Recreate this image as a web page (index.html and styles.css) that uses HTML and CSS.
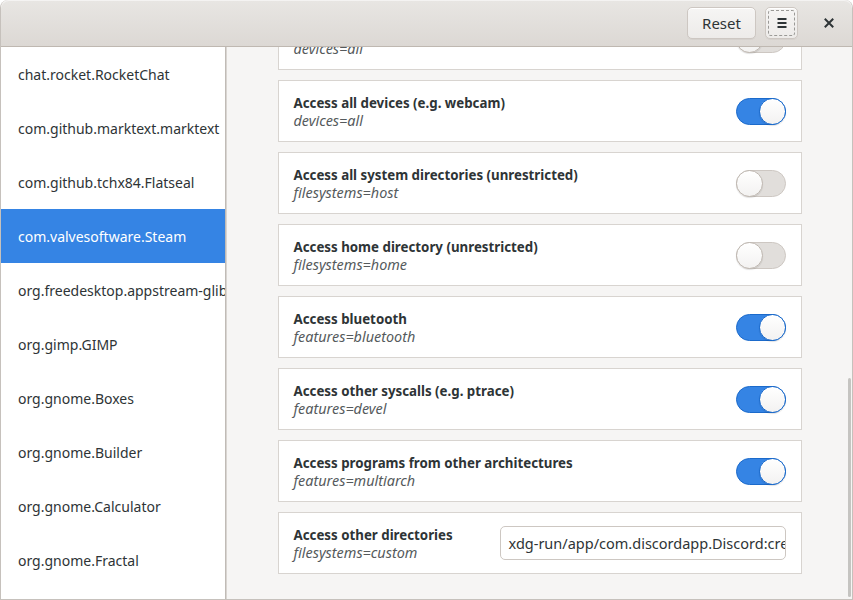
FILE: index.html
```html
<!DOCTYPE html>
<html>
<head>
<meta charset="utf-8">
<link rel="stylesheet" href="styles.css">
</head>
<body>
<div class="window">
  <header class="headerbar">
    <button class="btn btn-text">Reset</button>
    <button class="btn btn-icon focused" aria-label="Menu">
      <svg width="16" height="16" viewBox="0 0 16 16"><rect x="3.5" y="3" width="9" height="2" fill="#2e3436"/><rect x="3.5" y="7" width="9" height="2" fill="#2e3436"/><rect x="3.5" y="11" width="9" height="2" fill="#2e3436"/></svg>
    </button>
    <button class="btn-close" aria-label="Close">
      <svg width="16" height="16" viewBox="0 0 16 16"><path d="M4.5 4.5 L11.5 11.5 M11.5 4.5 L4.5 11.5" stroke="#2e3436" stroke-width="2" stroke-linecap="square"/></svg>
    </button>
  </header>
  <div class="body">
    <nav class="sidebar">
      <div class="row">chat.rocket.RocketChat</div>
      <div class="row">com.github.marktext.marktext</div>
      <div class="row">com.github.tchx84.Flatseal</div>
      <div class="row selected">com.valvesoftware.Steam</div>
      <div class="row">org.freedesktop.appstream-glib</div>
      <div class="row">org.gimp.GIMP</div>
      <div class="row">org.gnome.Boxes</div>
      <div class="row">org.gnome.Builder</div>
      <div class="row">org.gnome.Calculator</div>
      <div class="row">org.gnome.Fractal</div>
    </nav>
    <main class="content">
      <div class="cards">
        <div class="card">
          <div class="labels"><div class="title">Access all devices (e.g. webcam)</div><div class="sub">devices=all</div></div>
          <div class="switch"><div class="knob"></div></div>
        </div>
        <div class="card">
          <div class="labels"><div class="title">Access all devices (e.g. webcam)</div><div class="sub">devices=all</div></div>
          <div class="switch on"><div class="knob"></div></div>
        </div>
        <div class="card">
          <div class="labels"><div class="title">Access all system directories (unrestricted)</div><div class="sub">filesystems=host</div></div>
          <div class="switch"><div class="knob"></div></div>
        </div>
        <div class="card">
          <div class="labels"><div class="title">Access home directory (unrestricted)</div><div class="sub">filesystems=home</div></div>
          <div class="switch"><div class="knob"></div></div>
        </div>
        <div class="card">
          <div class="labels"><div class="title">Access bluetooth</div><div class="sub">features=bluetooth</div></div>
          <div class="switch on"><div class="knob"></div></div>
        </div>
        <div class="card">
          <div class="labels"><div class="title">Access other syscalls (e.g. ptrace)</div><div class="sub">features=devel</div></div>
          <div class="switch on"><div class="knob"></div></div>
        </div>
        <div class="card">
          <div class="labels"><div class="title">Access programs from other architectures</div><div class="sub">features=multiarch</div></div>
          <div class="switch on"><div class="knob"></div></div>
        </div>
        <div class="card">
          <div class="labels"><div class="title">Access other directories</div><div class="sub">filesystems=custom</div></div>
          <div class="entry">xdg-run/app/com.discordapp.Discord:create</div>
        </div>
      </div>
      <div class="scrollbar"></div>
    </main>
  </div>
</div>
</body>
</html>
```

FILE: styles.css
```css
* { box-sizing: border-box; }
html, body { margin: 0; padding: 0; background: #ffffff; }
body {
  font-family: "Noto Sans", "DejaVu Sans", sans-serif;
  font-size: 14px;
  color: #2e3436;
}
.window {
  width: 853px;
  height: 600px;
  border: 1px solid #c6c1bc;
  border-top: none;
  border-radius: 8px 8px 0 0;
  overflow: hidden;
  display: flex;
  flex-direction: column;
  background: #f6f5f4;
}
.headerbar {
  height: 47px;
  flex: none;
  display: flex;
  align-items: center;
  justify-content: flex-end;
  padding: 0;
  background: linear-gradient(#e8e6e3, #dcd8d4);
  border-bottom: 1px solid #bfb8b1;
  border-radius: 8px 8px 0 0;
  box-shadow: inset 0 1px #f4f3f2;
}
.btn {
  height: 32px;
  border: 1px solid #cdc7c2;
  border-radius: 5px;
  background: linear-gradient(#f6f5f4, #edebe9);
  box-shadow: inset 0 1px #ffffff, 0 1px rgba(0,0,0,0.04);
  font-family: inherit;
  font-size: 15px;
  color: #2e3436;
  padding: 0;
  display: flex;
  align-items: center;
  justify-content: center;
  position: relative;
}
.btn-text { width: 69px; margin-right: 9px; }
.btn-icon { width: 33px; margin-right: 17px; }
.btn-icon.focused::after {
  content: "";
  position: absolute;
  inset: 2px;
  border: 1px dashed #9a9996;
  border-radius: 3px;
}
.btn-close {
  width: 28px;
  height: 28px;
  border: none;
  background: none;
  padding: 0;
  margin-right: 9px;
  display: flex;
  align-items: center;
  justify-content: center;
}
.body {
  flex: 1;
  display: flex;
  min-height: 0;
}
.sidebar {
  width: 225px;
  flex: none;
  background: #ffffff;
  border-right: 1px solid #c0bbb6;
}
.row {
  height: 54px;
  display: flex;
  align-items: center;
  padding-left: 17px;
  white-space: nowrap;
  overflow: hidden;
  font-size: 14px;
}
.row.selected { background: #3584e4; color: #ffffff; }
.content {
  flex: 1;
  position: relative;
  overflow: hidden;
  border-left: 1px solid #d9d5d1;
  display: flex;
  flex-direction: column;
  justify-content: flex-end;
  align-items: center;
  padding-bottom: 25px;
}
.cards {
  width: 524px;
  display: flex;
  flex-direction: column;
  gap: 10px;
}
.card {
  flex: none;
  height: 62px;
  background: #ffffff;
  border: 1px solid #d8d4d0;
  display: flex;
  align-items: center;
  justify-content: space-between;
  padding: 0 15px 0 15px;
}
.labels { display: flex; flex-direction: column; padding-top: 1px; }
.title { font-weight: bold; font-size: 13.3px; line-height: 18px; }
.sub { font-style: italic; font-size: 14.4px; line-height: 18px; color: #555a5c; }
.switch {
  width: 50px;
  height: 27px;
  border-radius: 14px;
  border: 1px solid #cdc7c2;
  background: #e1dedb;
  display: flex;
  align-items: center;
  justify-content: flex-start;
}
.switch.on {
  background: #3584e4;
  border-color: #1b6acb;
  justify-content: flex-end;
}
.knob {
  width: 27px;
  height: 27px;
  margin: -1px;
  border-radius: 50%;
  background: linear-gradient(#ffffff, #f3f2f1);
  border: 1px solid #bfb8b1;
  box-shadow: 0 1px 1px rgba(0,0,0,0.12);
}
.switch.on .knob { border-color: #1b6acb; }
.entry {
  width: 286px;
  height: 34px;
  border: 1px solid #cdc7c2;
  border-radius: 5px;
  background: #ffffff;
  padding: 0 8px;
  font-size: 14.5px;
  display: flex;
  align-items: center;
  white-space: nowrap;
  overflow: hidden;
}
.scrollbar {
  position: absolute;
  right: 1px;
  bottom: 2px;
  width: 3px;
  height: 219px;
  border-radius: 2px;
  background: #c5c4c1;
}
```
